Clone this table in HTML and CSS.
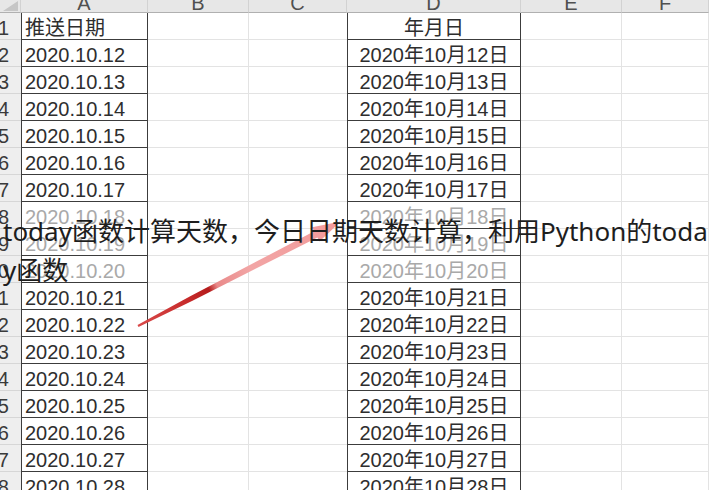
FILE: index.html
```html
<!DOCTYPE html>
<html lang="zh">
<head>
<meta charset="utf-8">
<title>today函数计算天数</title>
<link rel="stylesheet" href="styles.css">
</head>
<body>
<div class="sheet">
  <div class="c h corner"><i></i></div>
  <div class="c h"><span>A</span></div>
  <div class="c h"><span>B</span></div>
  <div class="c h"><span>C</span></div>
  <div class="c h"><span>D</span></div>
  <div class="c h"><span>E</span></div>
  <div class="c h"><span>F</span></div>

  <div class="c r">1</div><div class="c a">推送日期</div><div class="c"></div><div class="c cc"></div><div class="c d">年月日</div><div class="c"></div><div class="c"></div>
  <div class="c r">2</div><div class="c a">2020.10.12</div><div class="c"></div><div class="c cc"></div><div class="c d">2020年10月12日</div><div class="c"></div><div class="c"></div>
  <div class="c r">3</div><div class="c a">2020.10.13</div><div class="c"></div><div class="c cc"></div><div class="c d">2020年10月13日</div><div class="c"></div><div class="c"></div>
  <div class="c r">4</div><div class="c a">2020.10.14</div><div class="c"></div><div class="c cc"></div><div class="c d">2020年10月14日</div><div class="c"></div><div class="c"></div>
  <div class="c r">5</div><div class="c a">2020.10.15</div><div class="c"></div><div class="c cc"></div><div class="c d">2020年10月15日</div><div class="c"></div><div class="c"></div>
  <div class="c r">6</div><div class="c a">2020.10.16</div><div class="c"></div><div class="c cc"></div><div class="c d">2020年10月16日</div><div class="c"></div><div class="c"></div>
  <div class="c r">7</div><div class="c a">2020.10.17</div><div class="c"></div><div class="c cc"></div><div class="c d">2020年10月17日</div><div class="c"></div><div class="c"></div>
  <div class="c r">8</div><div class="c a fade">2020.10.18</div><div class="c"></div><div class="c cc"></div><div class="c d fade">2020年10月18日</div><div class="c"></div><div class="c"></div>
  <div class="c r">9</div><div class="c a fade">2020.10.19</div><div class="c"></div><div class="c cc"></div><div class="c d fade">2020年10月19日</div><div class="c"></div><div class="c"></div>
  <div class="c r">10</div><div class="c a fade">2020.10.20</div><div class="c"></div><div class="c cc"></div><div class="c d fade">2020年10月20日</div><div class="c"></div><div class="c"></div>
  <div class="c r">11</div><div class="c a">2020.10.21</div><div class="c"></div><div class="c cc"></div><div class="c d">2020年10月21日</div><div class="c"></div><div class="c"></div>
  <div class="c r">12</div><div class="c a">2020.10.22</div><div class="c"></div><div class="c cc"></div><div class="c d">2020年10月22日</div><div class="c"></div><div class="c"></div>
  <div class="c r">13</div><div class="c a">2020.10.23</div><div class="c"></div><div class="c cc"></div><div class="c d">2020年10月23日</div><div class="c"></div><div class="c"></div>
  <div class="c r">14</div><div class="c a">2020.10.24</div><div class="c"></div><div class="c cc"></div><div class="c d">2020年10月24日</div><div class="c"></div><div class="c"></div>
  <div class="c r">15</div><div class="c a">2020.10.25</div><div class="c"></div><div class="c cc"></div><div class="c d">2020年10月25日</div><div class="c"></div><div class="c"></div>
  <div class="c r">16</div><div class="c a">2020.10.26</div><div class="c"></div><div class="c cc"></div><div class="c d">2020年10月26日</div><div class="c"></div><div class="c"></div>
  <div class="c r">17</div><div class="c a">2020.10.27</div><div class="c"></div><div class="c cc"></div><div class="c d">2020年10月27日</div><div class="c"></div><div class="c"></div>
  <div class="c r">18</div><div class="c a">2020.10.28</div><div class="c"></div><div class="c cc"></div><div class="c d">2020年10月28日</div><div class="c"></div><div class="c"></div>
</div>

<svg class="arrow" width="709" height="490" viewBox="0 0 709 490" aria-hidden="true">
  <defs>
    <linearGradient id="ag" gradientUnits="userSpaceOnUse" x1="138" y1="326" x2="341" y2="222">
      <stop offset="0" stop-color="#d94a4a"/>
      <stop offset="0.25" stop-color="#c62a2a"/>
      <stop offset="0.35" stop-color="#b51c1c"/>
      <stop offset="0.39" stop-color="#e98a8a"/>
      <stop offset="0.55" stop-color="#f2a5a5"/>
      <stop offset="1" stop-color="#f29a9a"/>
    </linearGradient>
  </defs>
  <polygon fill="url(#ag)" points="137.5,325.1 190.2,296.3 314.2,231.3 312.1,227.3 340.7,221.6 319.5,241.5 317.4,237.5 192.5,300.7 138.5,326.9"/>
</svg>

<p class="caption">today函数计算天数，今日日期天数计算，利用Python的today函数</p>
</body>
</html>
```
FILE: styles.css
```css
* { box-sizing: border-box; }
html, body { margin: 0; padding: 0; }
body {
  width: 709px;
  height: 490px;
  overflow: hidden;
  position: relative;
  background: #ffffff;
  font-family: "Liberation Sans", "Noto Sans CJK SC", sans-serif;
  font-size: 20px;
  color: #2e2e2e;
}
.sheet {
  display: grid;
  grid-template-columns: 21px 127px 101px 98px 174px 101px 1fr;
  grid-template-rows: 13px repeat(18, 27px);
}
.c {
  border-right: 1px solid #e3e3e3;
  border-bottom: 1px solid #e3e3e3;
  overflow: hidden;
  white-space: nowrap;
  display: flex;
  align-items: flex-start;
  padding-top: 4px;
  line-height: 23px;
}
.cc { border-right: 0; }
.h {
  display: block;
  padding: 0;
  background: #e7e7e7;
  border-right: 1px solid #d2d2d2;
  border-bottom: 1px solid #b0b0b0;
  color: #505050;
  text-align: center;
}
.h span {
  display: block;
  margin-top: -7px;
  line-height: 20px;
}
.corner {
  display: flex;
  justify-content: flex-end;
  align-items: flex-end;
  padding: 0 2px 1px 0;
}
.corner i {
  display: block;
  width: 0;
  height: 0;
  border-left: 15px solid transparent;
  border-bottom: 10px solid #c6c6c6;
}
.r {
  background: #eeeeee;
  border-right: 0;
  border-bottom: 1px solid #d6d6d6;
  justify-content: flex-end;
  padding-right: 12px;
  color: #3a3a3a;
}
.a {
  border-left: 1px solid #3c3c3c;
  border-right: 1px solid #3c3c3c;
  border-bottom: 1px solid #3c3c3c;
  padding-left: 3px;
}
.d {
  border-left: 1px solid #3c3c3c;
  border-right: 1px solid #3c3c3c;
  border-bottom: 1px solid #3c3c3c;
  justify-content: center;
}
.fade { color: #a9a9a9; }
.arrow {
  position: absolute;
  left: 0;
  top: 0;
  pointer-events: none;
}
.caption {
  position: absolute;
  left: 3px;
  top: 212px;
  width: 706px;
  margin: 0;
  font-family: "Noto Sans", "Noto Sans CJK SC", sans-serif;
  font-size: 26px;
  line-height: 39px;
  color: #1e1e1e;
  word-break: break-all;
}
```
